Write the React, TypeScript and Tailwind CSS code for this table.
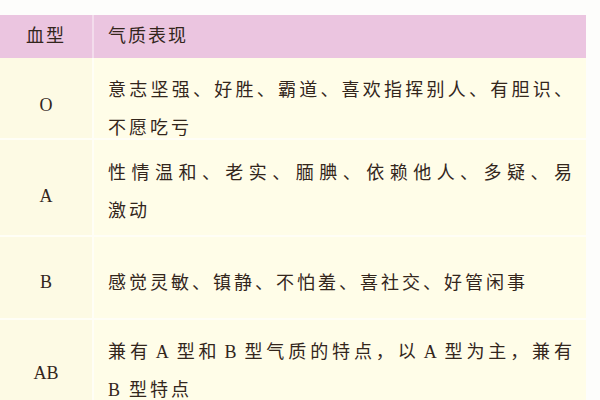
import type { ReactNode } from "react";

const L = ({ c }: { c: string }) => <span className="mx-[4px]">{c}</span>;

const rows: { type: string; h: string; lines: ReactNode[]; pt: string; lt: string }[] = [
  { type: "O", h: "h-[82px]", lines: ["意志坚强、好胜、霸道、喜欢指挥别人、有胆识、", "不愿吃亏"], pt: "pt-[22px]", lt: "pt-[14px]" },
  { type: "A", h: "h-[97px]", lines: ["性情温和、老实、腼腆、依赖他人、多疑、易", "激动"], pt: "pt-[8px]", lt: "pt-[18px]" },
  { type: "B", h: "h-[83px]", lines: ["感觉灵敏、镇静、不怕羞、喜社交、好管闲事"], pt: "pt-[10px]", lt: "pt-[10px]" },
  {
    type: "AB",
    h: "h-[90px]",
    lines: [
      <>兼有<L c="A" />型和<L c="B" />型气质的特点，以<L c="A" />型为主，兼有</>,
      <><span className="mr-[6px]">B</span>型特点</>,
    ],
    pt: "pt-[14px]",
    lt: "pt-[18px]",
  },
];

export default function App() {
  return (
    <div
      className="h-[400px] w-[600px] overflow-hidden bg-[#fdfdfb] pt-[15px] text-[#33261c]"
      style={{ fontFamily: '"Liberation Serif", "Noto Sans CJK SC", serif' }}
    >
      <div className="w-[586px]">
        {/* header */}
        <div className="flex h-[43px] bg-[#ebc5e0] text-[18px] tracking-[2px]">
          <div className="flex w-[94px] items-center justify-center border-r-2 border-[#f3dcec]">血型</div>
          <div className="flex flex-1 items-center pl-[14px]">气质表现</div>
        </div>

        {rows.map((r) => (
          <div key={r.type} className={`flex ${r.h} border-b-2 border-[#fffef6] bg-[#fffde8]`}>
            <div className={`flex w-[94px] items-center justify-center border-r-2 border-[#fffef6] bg-[#fdfae4] text-[18px] ${r.lt}`}>
              {r.type}
            </div>
            <div className={`flex flex-1 flex-col justify-center pl-[14px] text-[18px] leading-[38px] ${r.pt}`}>
              {r.lines.map((l, i) => (
                <div
                  key={i}
                  className={
                    r.lines.length > 1 && i === 0
                      ? "w-[466px] text-justify tracking-[2px] [text-align-last:justify]"
                      : "tracking-[3px]"
                  }
                >
                  {l}
                </div>
              ))}
            </div>
          </div>
        ))}
      </div>
    </div>
  );
}
